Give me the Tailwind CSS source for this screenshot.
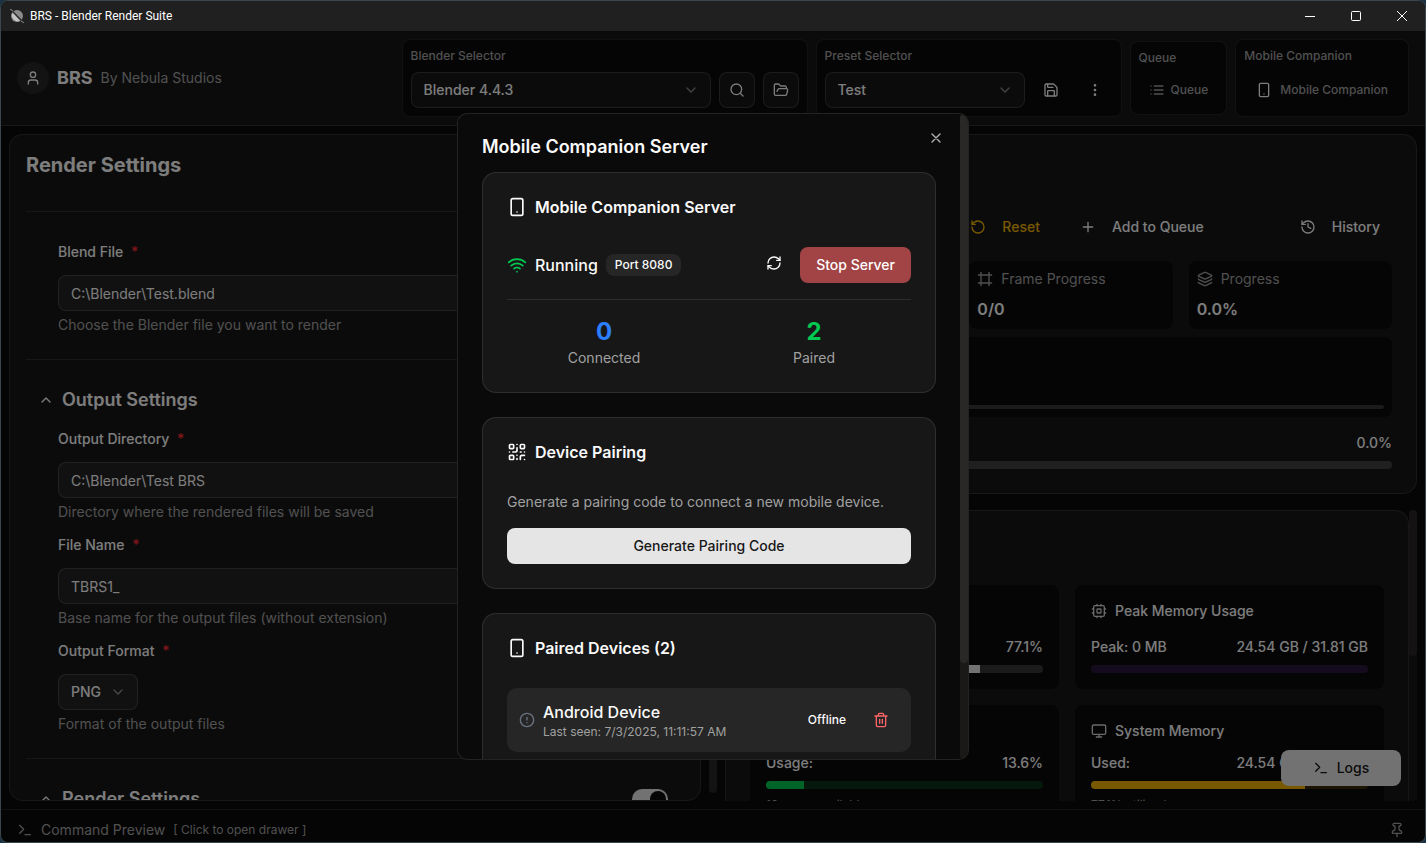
<!DOCTYPE html>
<html lang="en">
<head>
    <meta charset="UTF-8">
    <meta name="viewport" content="width=device-width, initial-scale=1.0">
    <script src="https://cdn.jsdelivr.net/npm/@tailwindcss/browser@4"></script>
    <title>BRS - Blender Render Suite</title>
</head>
<body class="bg-[#1b3245] font-['Inter',sans-serif] text-sm text-neutral-50">
    <!-- icon sprite -->
    <svg class="hidden">
        <symbol id="i-user" viewBox="0 0 24 24"><path d="M19 21v-2a4 4 0 0 0-4-4H9a4 4 0 0 0-4 4v2"/><circle cx="12" cy="7" r="4"/></symbol>
        <symbol id="i-down" viewBox="0 0 24 24"><path d="m6 9 6 6 6-6"/></symbol>
        <symbol id="i-up" viewBox="0 0 24 24"><path d="m18 15-6-6-6 6"/></symbol>
        <symbol id="i-search" viewBox="0 0 24 24"><circle cx="11" cy="11" r="8"/><path d="m21 21-4.3-4.3"/></symbol>
        <symbol id="i-folder" viewBox="0 0 24 24"><path d="m6 14 1.5-2.9A2 2 0 0 1 9.24 10H20a2 2 0 0 1 1.94 2.5l-1.54 6a2 2 0 0 1-1.95 1.5H4a2 2 0 0 1-2-2V5a2 2 0 0 1 2-2h3.9a2 2 0 0 1 1.69.9l.81 1.2a2 2 0 0 0 1.67.9H18a2 2 0 0 1 2 2v2"/></symbol>
        <symbol id="i-save" viewBox="0 0 24 24"><path d="M15.2 3a2 2 0 0 1 1.4.6l3.8 3.8a2 2 0 0 1 .6 1.4V19a2 2 0 0 1-2 2H5a2 2 0 0 1-2-2V5a2 2 0 0 1 2-2z"/><path d="M17 21v-7a1 1 0 0 0-1-1H8a1 1 0 0 0-1 1v7"/><path d="M7 3v4a1 1 0 0 0 1 1h7"/></symbol>
        <symbol id="i-more" viewBox="0 0 24 24"><circle cx="12" cy="12" r="1"/><circle cx="12" cy="5" r="1"/><circle cx="12" cy="19" r="1"/></symbol>
        <symbol id="i-list" viewBox="0 0 24 24"><path d="M3 6h.01M3 12h.01M3 18h.01M8 6h13M8 12h13M8 18h13"/></symbol>
        <symbol id="i-phone" viewBox="0 0 24 24"><rect width="14" height="20" x="5" y="2" rx="2"/><path d="M12 18h.01"/></symbol>
        <symbol id="i-reset" viewBox="0 0 24 24"><path d="M3 12a9 9 0 1 0 9-9 9.75 9.75 0 0 0-6.74 2.74L3 8"/><path d="M3 3v5h5"/></symbol>
        <symbol id="i-plus" viewBox="0 0 24 24"><path d="M5 12h14M12 5v14"/></symbol>
        <symbol id="i-history" viewBox="0 0 24 24"><path d="M3 12a9 9 0 1 0 9-9 9.75 9.75 0 0 0-6.74 2.74L3 8"/><path d="M3 3v5h5"/><path d="M12 7v5l4 2"/></symbol>
        <symbol id="i-frame" viewBox="0 0 24 24"><path d="M22 6H2M22 18H2M6 2v20M18 2v20"/></symbol>
        <symbol id="i-layers" viewBox="0 0 24 24"><path d="M12.83 2.18a2 2 0 0 0-1.66 0L2.6 6.08a1 1 0 0 0 0 1.83l8.58 3.91a2 2 0 0 0 1.66 0l8.58-3.9a1 1 0 0 0 0-1.83z"/><path d="M2 12a1 1 0 0 0 .58.91l8.6 3.91a2 2 0 0 0 1.65 0l8.58-3.9A1 1 0 0 0 22 12"/><path d="M2 17a1 1 0 0 0 .58.91l8.6 3.91a2 2 0 0 0 1.65 0l8.58-3.9A1 1 0 0 0 22 17"/></symbol>
        <symbol id="i-cpu" viewBox="0 0 24 24"><rect width="16" height="16" x="4" y="4" rx="2"/><rect width="6" height="6" x="9" y="9" rx="1"/><path d="M15 2v2M15 20v2M2 15h2M2 9h2M20 15h2M20 9h2M9 2v2M9 20v2"/></symbol>
        <symbol id="i-monitor" viewBox="0 0 24 24"><rect width="20" height="14" x="2" y="3" rx="2"/><path d="M8 21h8M12 17v4"/></symbol>
        <symbol id="i-terminal" viewBox="0 0 24 24"><path d="m4 17 6-6-6-6M12 19h8"/></symbol>
        <symbol id="i-pin" viewBox="0 0 24 24"><path d="M12 17v5"/><path d="M9 10.76a2 2 0 0 1-1.11 1.79l-1.78.9A2 2 0 0 0 5 15.24V16a1 1 0 0 0 1 1h12a1 1 0 0 0 1-1v-.76a2 2 0 0 0-1.11-1.79l-1.78-.9A2 2 0 0 1 15 10.76V7a1 1 0 0 1 1-1 2 2 0 0 0 0-4H8a2 2 0 0 0 0 4 1 1 0 0 1 1 1z"/></symbol>
        <symbol id="i-x" viewBox="0 0 24 24"><path d="M18 6 6 18M6 6l12 12"/></symbol>
        <symbol id="i-wifi" viewBox="0 0 24 24"><path d="M12 20h.01M2 8.82a15 15 0 0 1 20 0M5 12.859a10 10 0 0 1 14 0M8.5 16.429a5 5 0 0 1 7 0"/></symbol>
        <symbol id="i-refresh" viewBox="0 0 24 24"><path d="M3 12a9 9 0 0 1 9-9 9.75 9.75 0 0 1 6.74 2.74L21 8"/><path d="M21 3v5h-5"/><path d="M21 12a9 9 0 0 1-9 9 9.75 9.75 0 0 1-6.74-2.74L3 16"/><path d="M8 16H3v5"/></symbol>
        <symbol id="i-qr" viewBox="0 0 24 24"><rect width="5" height="5" x="3" y="3" rx="1"/><rect width="5" height="5" x="16" y="3" rx="1"/><rect width="5" height="5" x="3" y="16" rx="1"/><path d="M21 16h-3a2 2 0 0 0-2 2v3M21 21v.01M12 7v3a2 2 0 0 1-2 2H7M3 12h.01M12 3h.01M12 16v.01M16 12h1M21 12v.01M12 21v-1"/></symbol>
        <symbol id="i-alert" viewBox="0 0 24 24"><circle cx="12" cy="12" r="10"/><path d="M12 8v4M12 16h.01"/></symbol>
        <symbol id="i-trash" viewBox="0 0 24 24"><path d="M3 6h18M19 6v14c0 1-1 2-2 2H7c-1 0-2-1-2-2V6M8 6V4c0-1 1-2 2-2h4c1 0 2 1 2 2v2M10 11v6M14 11v6"/></symbol>
    </svg>

    <div class="flex h-screen flex-col overflow-hidden rounded-lg border border-[#3a474d] bg-neutral-950">
        <!-- title bar -->
        <div class="flex h-[30px] shrink-0 items-center bg-[#202020] pl-[9px] font-['Roboto',sans-serif] text-xs text-white">
            <svg class="mr-1.5 size-[14px]" viewBox="0 0 14 14"><circle cx="7" cy="7" r="6" fill="#8a8a8a"/><path d="M3 3a6 6 0 0 0 7 9z" fill="#c4c4c4"/><path d="M0 0l14 14" stroke="#2a2a2a" stroke-width="1.5"/><path d="M0 0l3 2M14 14l-3-2" stroke="#8a8a8a"/></svg>
            <span>BRS - Blender Render Suite</span>
            <div class="ml-auto flex h-full">
                <button class="grid w-[46px] place-items-center" aria-label="Minimize"><svg class="size-[10px]" viewBox="0 0 10 10" stroke="currentColor"><path d="M0 5.5h10"/></svg></button>
                <button class="grid w-[46px] place-items-center" aria-label="Maximize"><svg class="size-[10px]" viewBox="0 0 10 10" fill="none" stroke="currentColor"><rect x=".5" y=".5" width="9" height="9" rx="1"/></svg></button>
                <button class="grid w-[46px] place-items-center" aria-label="Close"><svg class="size-[10px]" viewBox="0 0 10 10" stroke="currentColor"><path d="M0 0l10 10M10 0L0 10"/></svg></button>
            </div>
        </div>

        <div class="relative flex min-h-0 flex-1 flex-col">
            <!-- header -->
            <header class="flex shrink-0 items-center gap-2 border-b border-white/10 bg-neutral-900 px-4 py-2">
                <div class="grid size-8 place-items-center rounded-full bg-neutral-800"><svg class="size-4 fill-none stroke-current stroke-2 [stroke-linecap:round] [stroke-linejoin:round]"><use href="#i-user"/></svg></div>
                <h1 class="text-lg font-bold">BRS</h1>
                <span class="mr-auto text-neutral-400">By Nebula Studios</span>

                <div class="rounded-lg border border-white/10 bg-neutral-950 p-2">
                    <label for="blender" class="mb-2 block text-xs font-medium text-neutral-400">Blender Selector</label>
                    <div class="flex gap-2">
                        <div class="relative">
                            <select id="blender" class="h-9 w-[300px] appearance-none rounded-lg border border-white/15 bg-white/5 px-3 font-medium"><option>Blender 4.4.3</option></select>
                            <svg class="pointer-events-none absolute top-[10px] right-3 size-4 fill-none stroke-current stroke-2 opacity-50 [stroke-linecap:round] [stroke-linejoin:round]"><use href="#i-down"/></svg>
                        </div>
                        <button class="grid size-9 place-items-center rounded-lg border border-white/15 bg-white/5" aria-label="Search"><svg class="size-4 fill-none stroke-current stroke-2 [stroke-linecap:round] [stroke-linejoin:round]"><use href="#i-search"/></svg></button>
                        <button class="grid size-9 place-items-center rounded-lg border border-white/15 bg-white/5" aria-label="Open folder"><svg class="size-4 fill-none stroke-current stroke-2 [stroke-linecap:round] [stroke-linejoin:round]"><use href="#i-folder"/></svg></button>
                    </div>
                </div>

                <div class="rounded-lg border border-white/10 bg-neutral-950 p-2">
                    <label for="preset" class="mb-2 block text-xs font-medium text-neutral-400">Preset Selector</label>
                    <div class="flex gap-2">
                        <div class="relative">
                            <select id="preset" class="h-9 w-[200px] appearance-none rounded-lg border border-white/15 bg-white/5 px-3 font-medium"><option>Test</option></select>
                            <svg class="pointer-events-none absolute top-[10px] right-3 size-4 fill-none stroke-current stroke-2 opacity-50 [stroke-linecap:round] [stroke-linejoin:round]"><use href="#i-down"/></svg>
                        </div>
                        <button class="grid size-9 place-items-center" aria-label="Save preset"><svg class="size-4 fill-none stroke-current stroke-2 [stroke-linecap:round] [stroke-linejoin:round]"><use href="#i-save"/></svg></button>
                        <button class="grid size-9 place-items-center" aria-label="More"><svg class="size-4 fill-none stroke-current stroke-2 [stroke-linecap:round] [stroke-linejoin:round]"><use href="#i-more"/></svg></button>
                    </div>
                </div>

                <div class="rounded-lg border border-white/10 bg-neutral-950 p-2 text-xs font-medium text-neutral-400">
                    <div class="mb-2">Queue</div>
                    <button class="flex h-8 items-center gap-1.5 px-2.5"><svg class="size-4 fill-none stroke-current stroke-2 [stroke-linecap:round] [stroke-linejoin:round]"><use href="#i-list"/></svg>Queue</button>
                </div>

                <div class="rounded-lg border border-white/10 bg-neutral-950 p-2 text-xs font-medium text-neutral-400">
                    <div class="mb-2">Mobile Companion</div>
                    <button class="flex h-9 items-center gap-2 px-3"><svg class="size-4 fill-none stroke-neutral-50 stroke-2 [stroke-linecap:round] [stroke-linejoin:round]"><use href="#i-phone"/></svg>Mobile Companion</button>
                </div>
            </header>

            <!-- main -->
            <main class="grid min-h-0 flex-1 grid-cols-[minmax(0,1fr)_8px_minmax(0,1fr)] grid-rows-[minmax(0,1fr)] gap-2 p-2">
                <section class="overflow-hidden rounded-[14px] border border-white/10 bg-neutral-900 p-4">
                    <h2 class="mb-8 text-xl font-bold">Render Settings</h2>

                    <div class="border-t border-white/10 px-8 pt-[29px] pb-6">
                        <label for="blend" class="mb-3 block leading-[22px] font-medium">Blend File <span class="ml-1 text-red-500">*</span></label>
                        <input id="blend" class="h-9 w-full rounded-lg border border-white/15 bg-white/5 px-3" value="C:\Blender\Test.blend">
                        <p class="mt-1 text-neutral-400">Choose the Blender file you want to render</p>
                    </div>

                    <div class="border-t border-white/10 py-6">
                        <button class="flex h-8 items-center gap-2 px-3 text-lg font-semibold"><svg class="size-4 fill-none stroke-current stroke-2 [stroke-linecap:round] [stroke-linejoin:round]"><use href="#i-up"/></svg>Output Settings</button>
                        <div class="mt-3 space-y-3 px-8">
                            <div>
                                <label for="dir" class="mb-3 block leading-[22px] font-medium">Output Directory <span class="ml-1 text-red-500">*</span></label>
                                <input id="dir" class="h-9 w-full rounded-lg border border-white/15 bg-white/5 px-3" value="C:\Blender\Test BRS">
                                <p class="mt-1 text-neutral-400">Directory where the rendered files will be saved</p>
                            </div>
                            <div>
                                <label for="name" class="mb-3 block leading-[22px] font-medium">File Name <span class="ml-1 text-red-500">*</span></label>
                                <input id="name" class="h-9 w-full rounded-lg border border-white/15 bg-white/5 px-3" value="TBRS1_">
                                <p class="mt-1 text-neutral-400">Base name for the output files (without extension)</p>
                            </div>
                            <div>
                                <label for="format" class="mb-3 block leading-[22px] font-medium">Output Format <span class="ml-1 text-red-500">*</span></label>
                                <div class="relative w-20">
                                    <select id="format" class="block h-9 w-full appearance-none rounded-lg border border-white/15 bg-white/5 px-3 font-medium"><option>PNG</option></select>
                                    <svg class="pointer-events-none absolute top-[10px] right-3 size-4 fill-none stroke-current stroke-2 opacity-50 [stroke-linecap:round] [stroke-linejoin:round]"><use href="#i-down"/></svg>
                                </div>
                                <p class="mt-1 text-neutral-400">Format of the output files</p>
                            </div>
                        </div>
                    </div>

                    <div class="flex items-center justify-between border-t border-white/10 py-6 pr-4">
                        <button class="flex h-8 items-center gap-2 px-3 text-lg font-semibold"><svg class="size-4 fill-none stroke-current stroke-2 [stroke-linecap:round] [stroke-linejoin:round]"><use href="#i-up"/></svg>Render Settings</button>
                        <label class="flex h-5 w-9 items-center justify-end rounded-full bg-neutral-200 p-0.5">
                            <input type="checkbox" checked class="size-4 appearance-none rounded-full bg-neutral-950" aria-label="Render Settings">
                        </label>
                    </div>
                </section>

                <div class="pb-2"><div class="h-full rounded bg-neutral-800"></div></div>

                <div class="flex flex-col gap-4">
                    <!-- render status -->
                    <section class="shrink-0 rounded-[14px] border border-white/10 bg-neutral-900 px-6 pt-[74px] pb-6">
                        <div class="flex h-9 justify-end gap-4 font-medium">
                            <button class="flex items-center gap-4 px-3 text-yellow-500"><svg class="size-4 fill-none stroke-current stroke-2 [stroke-linecap:round] [stroke-linejoin:round]"><use href="#i-reset"/></svg>Reset</button>
                            <button class="flex items-center gap-4 px-3"><svg class="size-4 fill-none stroke-current stroke-2 [stroke-linecap:round] [stroke-linejoin:round]"><use href="#i-plus"/></svg>Add to Queue</button>
                            <button class="ml-14 flex items-center gap-4 px-3"><svg class="size-4 fill-none stroke-current stroke-2 [stroke-linecap:round] [stroke-linejoin:round]"><use href="#i-history"/></svg>History</button>
                        </div>
                        <div class="mt-4 grid grid-cols-3 gap-4">
                            <div class="rounded-lg bg-neutral-950"></div>
                            <div class="rounded-lg bg-neutral-950 p-2">
                                <div class="flex items-center gap-2 text-neutral-400"><svg class="size-4 fill-none stroke-current stroke-2 [stroke-linecap:round] [stroke-linejoin:round]"><use href="#i-frame"/></svg>Frame Progress</div>
                                <div class="mt-2 text-base font-semibold">0/0</div>
                            </div>
                            <div class="rounded-lg bg-neutral-950 p-2">
                                <div class="flex items-center gap-2 text-neutral-400"><svg class="size-4 fill-none stroke-current stroke-2 [stroke-linecap:round] [stroke-linejoin:round]"><use href="#i-layers"/></svg>Progress</div>
                                <div class="mt-2 text-base font-semibold">0.0%</div>
                            </div>
                        </div>
                        <div class="mt-2 flex h-20 items-end rounded-lg bg-neutral-950 p-2">
                            <div class="h-1 w-full rounded-full bg-[#363636]"></div>
                        </div>
                        <div class="mt-4 text-right font-medium">0.0%</div>
                        <div class="mt-2 h-2 rounded-full bg-[#404040]"></div>
                    </section>

                    <!-- system monitor -->
                    <div class="flex min-h-0 flex-1">
                        <section class="min-w-0 flex-1 overflow-hidden rounded-t-[14px] border border-b-0 border-white/10 bg-neutral-900 px-6 pt-[74px]">
                            <div class="grid grid-cols-2 gap-4 font-medium">
                                <div class="rounded-lg bg-neutral-950 p-4">
                                    <div class="mb-4 h-5"></div>
                                    <div class="text-right">77.1%</div>
                                    <div class="mt-2 h-2 overflow-hidden rounded-full bg-[#363636]"><div class="h-full bg-neutral-200" style="width: 77.1%"></div></div>
                                </div>
                                <div class="rounded-lg bg-neutral-950 p-4">
                                    <div class="mb-4 flex items-center gap-2"><svg class="size-4 fill-none stroke-neutral-300 stroke-2 [stroke-linecap:round] [stroke-linejoin:round]"><use href="#i-cpu"/></svg>Peak Memory Usage</div>
                                    <div class="flex justify-between"><span>Peak: 0 MB</span><span>24.54 GB / 31.81 GB</span></div>
                                    <div class="mt-2 h-2 rounded-full bg-purple-500/20"></div>
                                </div>
                                <div class="rounded-lg bg-neutral-950 p-4">
                                    <div class="mb-3 h-5"></div>
                                    <div class="flex justify-between"><span>Usage:</span><span>13.6%</span></div>
                                    <div class="mt-2 h-2 overflow-hidden rounded-full bg-green-500/20"><div class="h-full bg-green-500" style="width: 13.6%"></div></div>
                                    <div class="mt-2 text-xs font-normal text-neutral-400">12 cores available</div>
                                </div>
                                <div class="rounded-lg bg-neutral-950 p-4">
                                    <div class="mb-3 flex items-center gap-2"><svg class="size-4 fill-none stroke-neutral-300 stroke-2 [stroke-linecap:round] [stroke-linejoin:round]"><use href="#i-monitor"/></svg>System Memory</div>
                                    <div class="flex justify-between"><span>Used:</span><span>24.54 GB / 31.81 GB</span></div>
                                    <div class="mt-2 h-2 overflow-hidden rounded-full bg-yellow-500/20"><div class="h-full bg-yellow-500" style="width: 77.1%"></div></div>
                                    <div class="mt-2 text-xs font-normal text-neutral-400">77.1% utilized</div>
                                </div>
                            </div>
                        </section>
                        <div class="w-2 shrink-0 rounded bg-neutral-900"><div class="h-1/2 rounded bg-[#292524]"></div></div>
                    </div>
                </div>
            </main>

            <!-- command preview -->
            <footer class="flex h-[33px] shrink-0 items-start gap-2 overflow-hidden border-t border-white/10 px-4 pt-2.5 text-neutral-400">
                <svg class="mt-0.5 size-4 fill-none stroke-current stroke-2 [stroke-linecap:round] [stroke-linejoin:round]"><use href="#i-terminal"/></svg>
                <span>Command Preview</span>
                <span class="text-xs leading-5">[ Click to open drawer ]</span>
                <button class="mt-0.5 mr-1 ml-auto" aria-label="Pin"><svg class="size-4 fill-none stroke-current stroke-2 [stroke-linecap:round] [stroke-linejoin:round]"><use href="#i-pin"/></svg></button>
            </footer>

            <button class="absolute right-6 bottom-14 flex h-9 w-30 items-center justify-center gap-2 rounded-lg bg-neutral-200 font-medium text-neutral-900"><svg class="size-4 fill-none stroke-current stroke-2 [stroke-linecap:round] [stroke-linejoin:round]"><use href="#i-terminal"/></svg>Logs</button>

            <!-- dialog -->
            <div class="absolute inset-0 flex items-center justify-center bg-black/50">
                <div role="dialog" aria-labelledby="dialog-title" class="relative flex h-[calc(80%-1px)] w-full max-w-lg overflow-hidden rounded-[10px] border border-white/10 bg-neutral-950">
                    <div class="min-w-0 flex-1 overflow-hidden p-6">
                        <h2 id="dialog-title" class="mb-4 text-lg leading-[18px] font-semibold">Mobile Companion Server</h2>

                        <div class="space-y-6">
                            <div class="rounded-[14px] border border-white/10 bg-neutral-900 p-6">
                                <h3 class="mb-[30px] flex h-5 items-center gap-2 text-base font-semibold"><svg class="size-5 fill-none stroke-current stroke-2 [stroke-linecap:round] [stroke-linejoin:round]"><use href="#i-phone"/></svg>Mobile Companion Server</h3>
                                <div class="flex items-center gap-2 border-b border-white/10 pb-4">
                                    <svg class="size-5 fill-none stroke-green-500 stroke-2 [stroke-linecap:round] [stroke-linejoin:round]"><use href="#i-wifi"/></svg>
                                    <span class="text-base font-medium">Running</span>
                                    <span class="rounded-lg bg-neutral-800 px-[9px] py-[3px] text-xs font-medium">Port 8080</span>
                                    <button class="mr-2.5 mb-1 ml-auto" aria-label="Refresh"><svg class="size-4 fill-none stroke-current stroke-2 [stroke-linecap:round] [stroke-linejoin:round]"><use href="#i-refresh"/></svg></button>
                                    <button class="h-9 rounded-lg bg-[#a24446] px-4 font-medium text-white">Stop Server</button>
                                </div>
                                <div class="grid grid-cols-2 gap-4 pt-4 text-center">
                                    <div>
                                        <div class="text-2xl font-bold text-blue-500">0</div>
                                        <div class="text-neutral-400">Connected</div>
                                    </div>
                                    <div>
                                        <div class="text-2xl font-bold text-green-500">2</div>
                                        <div class="text-neutral-400">Paired</div>
                                    </div>
                                </div>
                            </div>

                            <div class="rounded-[14px] border border-white/10 bg-neutral-900 p-6">
                                <h3 class="mb-[30px] flex h-5 items-center gap-2 text-base font-semibold"><svg class="size-5 fill-none stroke-current stroke-2 [stroke-linecap:round] [stroke-linejoin:round]"><use href="#i-qr"/></svg>Device Pairing</h3>
                                <p class="mb-4 text-neutral-400">Generate a pairing code to connect a new mobile device.</p>
                                <button class="h-9 w-full rounded-lg bg-neutral-200 font-medium text-neutral-900">Generate Pairing Code</button>
                            </div>

                            <div class="rounded-[14px] border border-white/10 bg-neutral-900 p-6">
                                <h3 class="mb-[30px] flex h-5 items-center gap-2 text-base font-semibold"><svg class="size-5 fill-none stroke-current stroke-2 [stroke-linecap:round] [stroke-linejoin:round]"><use href="#i-phone"/></svg>Paired Devices (2)</h3>
                                <div class="flex items-center gap-2 rounded-[10px] bg-neutral-800 p-3">
                                    <svg class="size-4 fill-none stroke-gray-500 stroke-2 [stroke-linecap:round] [stroke-linejoin:round]"><use href="#i-alert"/></svg>
                                    <div class="mr-auto">
                                        <div class="text-base font-medium">Android Device</div>
                                        <div class="text-xs text-neutral-400">Last seen: 7/3/2025, 11:11:57 AM</div>
                                    </div>
                                    <span class="px-[9px] text-xs font-medium">Offline</span>
                                    <button class="grid size-9 place-items-center text-red-400" aria-label="Remove device"><svg class="size-4 fill-none stroke-current stroke-2 [stroke-linecap:round] [stroke-linejoin:round]"><use href="#i-trash"/></svg></button>
                                </div>
                            </div>
                        </div>
                    </div>
                    <div class="w-2 shrink-0 rounded bg-[#1a1918]"><div class="h-[85%] rounded bg-[#292827]"></div></div>
                    <button class="absolute top-4 right-6 opacity-70" aria-label="Close dialog"><svg class="size-4 fill-none stroke-current stroke-2 [stroke-linecap:round] [stroke-linejoin:round]"><use href="#i-x"/></svg></button>
                </div>
            </div>
        </div>
    </div>
</body>
</html>
